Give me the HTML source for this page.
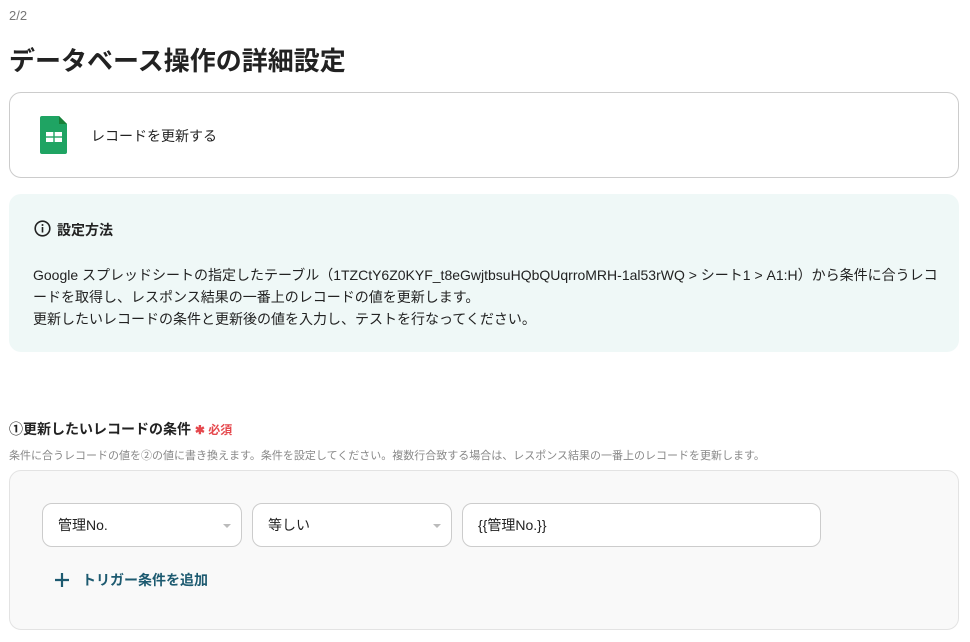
<!DOCTYPE html>
<html><head><meta charset="utf-8"><style>
*{box-sizing:border-box;margin:0;padding:0}
body{width:970px;height:642px;overflow:hidden;background:#fff;font-family:"Liberation Sans","Noto Sans CJK JP",sans-serif;color:#222;position:relative}
.a{position:absolute}
.sel{position:absolute;top:503px;height:44px;border:1px solid #ccc;border-radius:10px;background:#fff;font-size:14px;line-height:42px;padding-left:15px}
.sel .tri{position:absolute;right:10px;top:20px;width:0;height:0;border-left:4px solid transparent;border-right:4px solid transparent;border-top:4px solid #bbb}
</style></head><body>
<div class="a" style="left:9px;top:8px;font-size:13px;color:#777">2/2</div>
<div class="a" style="left:9px;top:41px;font-size:26px;font-weight:bold;color:#222">データベース操作の詳細設定</div>
<div class="a" style="left:9px;top:92px;width:950px;height:86px;border:1px solid #ccc;border-radius:12px"></div>
<svg class="a" style="left:40px;top:116px" width="28" height="38" viewBox="0 0 28 38"><path d="M2 0H19L27 8V36Q27 38 25 38H2Q0 38 0 36V2Q0 0 2 0Z" fill="#1fa463"/><path d="M19 0L27 8H19Z" fill="#188038"/><rect x="6" y="16" width="16" height="10" fill="#fff"/><rect x="13.3" y="16" width="1.4" height="10" fill="#1fa463"/><rect x="6" y="20.3" width="16" height="1.4" fill="#1fa463"/></svg>
<div class="a" style="left:91px;top:126px;font-size:14px">レコードを更新する</div>
<div class="a" style="left:9px;top:194px;width:950px;height:158px;background:#eff8f7;border-radius:12px"></div>
<svg class="a" style="left:34px;top:220px" width="17" height="17" viewBox="0 0 17 17"><circle cx="8.5" cy="8.5" r="7.3" fill="none" stroke="#222" stroke-width="1.6"/><rect x="7.7" y="7" width="1.6" height="5.5" fill="#222"/><circle cx="8.5" cy="5" r="1" fill="#222"/></svg>
<div class="a" style="left:57px;top:220px;font-size:14px;font-weight:bold">設定方法</div>
<div class="a" style="left:33px;top:264px;font-size:14px;line-height:22px;color:#222;width:910px">Google スプレッドシートの指定したテーブル（1TZCtY6Z0KYF_t8eGwjtbsuHQbQUqrroMRH-1al53rWQ &gt; シート1 &gt; A1:H）から条件に合うレコ<br>ードを取得し、レスポンス結果の一番上のレコードの値を更新します。<br>更新したいレコードの条件と更新後の値を入力し、テストを行なってください。</div>
<div class="a" style="left:9px;top:419px;font-size:14px;font-weight:bold">①更新したいレコードの条件 <span style="color:#e5484d;font-size:12px">✱ 必須</span></div>
<div class="a" style="left:9px;top:447px;font-size:11px;color:#888">条件に合うレコードの値を②の値に書き換えます。条件を設定してください。複数行合致する場合は、レスポンス結果の一番上のレコードを更新します。</div>
<div class="a" style="left:9px;top:470px;width:950px;height:160px;background:#f9f9f9;border:1px solid #e3e3e3;border-radius:12px"></div>
<div class="sel" style="left:42px;width:200px">管理No.<span class="tri"></span></div>
<div class="sel" style="left:252px;width:200px">等しい<span class="tri"></span></div>
<div class="sel" style="left:462px;width:359px">{{管理No.}}</div>
<svg class="a" style="left:55px;top:573px" width="14" height="14" viewBox="0 0 14 14"><path d="M7 0V14M0 7H14" stroke="#1d5a70" stroke-width="2.2"/></svg>
<div class="a" style="left:82px;top:570px;font-size:14px;font-weight:bold;color:#1d5a70">トリガー条件を追加</div>
</body></html>
